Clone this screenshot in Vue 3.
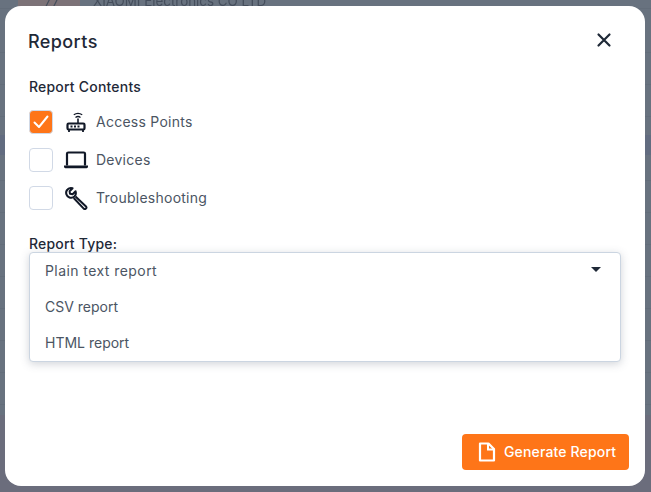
<script setup>
const options = ['CSV report', 'HTML report']
</script>

<template>
  <div class="screen">
    <div class="peek"><span class="num">77</span><span class="vendor">XIAOMI Electronics CO LTD</span></div>
    <section class="modal">
      <header class="head">
        <h2>Reports</h2>
        <svg class="close" width="24" height="24" viewBox="0 0 24 24"><path d="M6.500 6.500 17.500 17.500M17.500 6.500 6.500 17.500" fill="none" stroke="#1f2937" stroke-width="2.200" stroke-linecap="round"/></svg>
      </header>
      <h3 class="label">Report Contents</h3>
      <div class="checks">
        <div class="check">
          <span class="box on">
            <svg width="22" height="22" viewBox="0 0 22 22"><path d="M4.500 11.500 9 16 17.500 5.500" fill="none" stroke="#fff" stroke-width="2" stroke-linecap="round" stroke-linejoin="round"/></svg>
          </span>
          <svg class="ico" width="24" height="24" viewBox="0 0 24 24">
            <rect x="3.500" y="13.500" width="17" height="6" rx="1.200" fill="none" stroke="#111827" stroke-width="2.200"/>
            <path d="M14 13V8.500" stroke="#111827" stroke-width="1.600" fill="none"/>
            <path d="M5 20v2M19 20v2" stroke="#111827" stroke-width="1.800" fill="none"/>
            <path d="M11.500 7.500Q14 5.500 16.500 7.500M9.800 4.800Q14 1.800 18.200 4.800" stroke="#111827" stroke-width="1.300" fill="none"/>
            <path d="M6.500 16.500h2M10 16.500h2M13.500 16.500h2" stroke="#111827" stroke-width="1.800" fill="none"/>
          </svg>
          <span class="text">Access Points</span>
        </div>
        <div class="check">
          <span class="box"></span>
          <svg class="ico" width="24" height="24" viewBox="0 0 24 24">
            <path d="M3 17.500V5.800A1.300 1.300 0 0 1 4.300 4.500h15.400A1.300 1.300 0 0 1 21 5.800V17.500" fill="none" stroke="#111827" stroke-width="2.200"/>
            <path d="M0 17.500h24v1.300a1.400 1.400 0 0 1-1.400 1.400H1.400A1.400 1.400 0 0 1 0 18.800z" fill="#111827"/>
          </svg>
          <span class="text">Devices</span>
        </div>
        <div class="check">
          <span class="box"></span>
          <svg class="ico" width="24" height="24" viewBox="0 0 24 24">
            <path d="M8.600 2.200 5.600 5.200 6 7.800l2.600.5 3-3c.6 1.900.2 3.800-1.100 5.100-1.300 1.300-3.300 1.700-5 1.100-1.300-.5-2.600-1.800-3.100-3.200C1.800 6.600 2.200 4.800 3.500 3.500 4.900 2 6.800 1.600 8.600 2.200Z" fill="none" stroke="#111827" stroke-width="2" stroke-linejoin="round"/>
            <path d="M11.500 10.500 22 20.400a1.600 1.600 0 0 1-.1 2.200 1.600 1.600 0 0 1-2.200 0L9.700 12" fill="none" stroke="#111827" stroke-width="2"/>
          </svg>
          <span class="text">Troubleshooting</span>
        </div>
      </div>
      <h3 class="label type">Report Type:</h3>
      <div class="select">
        <div class="opt first">
          <span>Plain text report</span>
          <span class="caret"></span>
        </div>
        <div v-for="o in options" :key="o" class="opt rest">{{ o }}</div>
      </div>
      <footer class="foot">
        <button class="gen">
          <svg width="18" height="20" viewBox="0 0 18 20"><path d="M2 1.500h8.500L16 7v11.500H2z" fill="none" stroke="#fff" stroke-width="2.200" stroke-linejoin="round"/><path d="M10 1.500V7.500H16" fill="none" stroke="#fff" stroke-width="2"/></svg>
          <span class="gen-text">Generate Report</span>
        </button>
      </footer>
    </section>
  </div>
</template>

<style>
html, body { margin: 0; background: #68727f; }
</style>

<style scoped>
.screen {
  position: relative;
  box-sizing: border-box;
  width: 651px;
  height: 492px;
  padding: 6px 6px 6px 5px;
  overflow: hidden;
  background:
    linear-gradient(#626c80, #626c80) 0 135px / 100% 20px no-repeat,
    linear-gradient(#6b6d7c, #6b6d7c) 0 415px / 100% 77px no-repeat,
    repeating-linear-gradient(#68727f 0 31px, #636d7a 31px 32px) 0 21px;
  background-color: #68727f;
  font-family: "Inter", "Liberation Sans", sans-serif;
}
.peek {
  position: absolute;
  top: -6px;
  left: 18px;
  display: flex;
  color: #454e5c;
  font-size: 13.400px;
  line-height: 14px;
  height: 14px;
  filter: blur(0.4px);
}
.num { box-sizing: border-box; width: 62px; padding-left: 6px; text-align: center; background: #7c7277; }
.vendor { padding-left: 13px; }
.modal {
  position: relative;
  box-sizing: border-box;
  height: 480px;
  display: flex;
  flex-direction: column;
  padding: 22px 16px 16px 24px;
  background: #fff;
  border-radius: 16px;
}
.head {
  display: flex;
  align-items: center;
  justify-content: space-between;
  height: 28px;
}
h2 {
  margin: -2px 0 0 -1px;
  font-size: 18px;
  font-weight: 500;
  color: #1f2937;
  letter-spacing: 0.4px;
}
.close { margin: -4px 13px 0 0; }
.label {
  margin: 22px 0 0;
  font-size: 14px;
  line-height: 18px;
  font-weight: 500;
  color: #1f2937;
  letter-spacing: 0.2px;
}
.checks {
  display: flex;
  flex-direction: column;
  gap: 14px;
  margin-top: 14px;
}
.check { display: flex; align-items: center; height: 24px; }
.box {
  box-sizing: border-box;
  width: 24px;
  height: 24px;
  display: flex;
  align-items: center;
  justify-content: center;
  border: 1px solid #d1d9e6;
  border-radius: 4px;
  background: #fff;
}
.box.on { background: #fe7518; }
.ico { margin-left: 11px; }
.text {
  margin: 0 0 0 8px;
  font-size: 14px;
  line-height: 18px;
  color: #4b5563;
  letter-spacing: 0.25px;
}
.type { margin-top: 26px; line-height: 16px; }
.select {
  box-sizing: border-box;
  width: 592px;
  height: 110px;
  margin-top: 0;
  border: 1px solid #cbd5e1;
  border-radius: 4px;
  background: #fff;
  box-shadow: 0 2px 8px rgba(71, 85, 105, 0.25);
}
.opt {
  display: flex;
  align-items: center;
  justify-content: space-between;
  box-sizing: border-box;
  height: 36px;
  padding: 0 19px 2px 15px;
  font-size: 14px;
  color: #4b5563;
  letter-spacing: 0.43px;
}
.rest { letter-spacing: 0; }
.caret {
  width: 0;
  height: 0;
  border-left: 5px solid transparent;
  border-right: 5px solid transparent;
  border-top: 5px solid #1f2937;
  margin-bottom: 1px;
}
.foot {
  margin-top: auto;
  display: flex;
  justify-content: flex-end;
}
.gen {
  display: flex;
  align-items: center;
  gap: 8px;
  box-sizing: border-box;
  width: 167px;
  height: 36px;
  padding: 0 0 0 16px;
  border: 0;
  border-radius: 4px;
  background: #fe7518;
  color: #fff;
  font-family: inherit;
  font-size: 14px;
  font-weight: 500;
  letter-spacing: 0.15px;
}
.gen-text { margin-bottom: 2px; }
</style>
